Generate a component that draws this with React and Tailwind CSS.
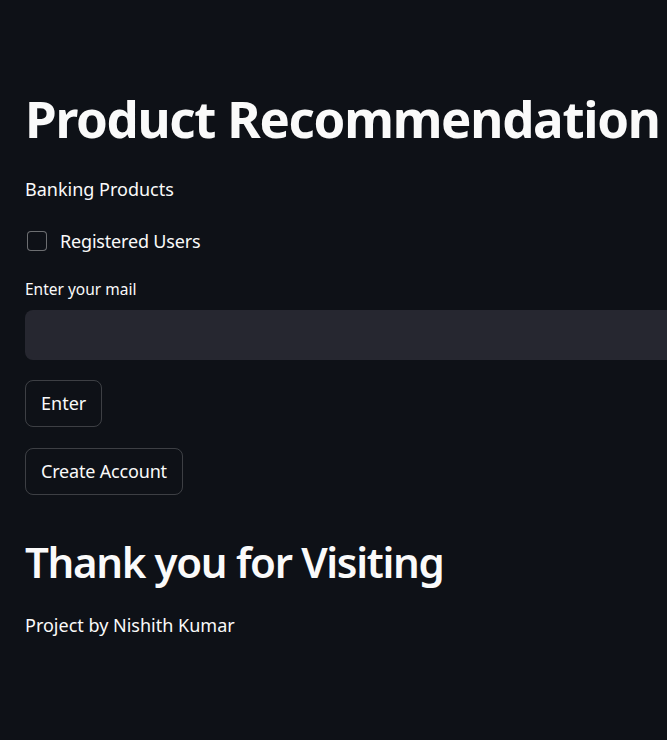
export default function App() {
  return (
    <div className="min-h-[740px] w-full overflow-hidden bg-[#0e1117] text-[#fafafa]" style={{ fontFamily: '"Noto Sans", "Open Sans", sans-serif' }}>
      <div className="w-[820px] pl-[25px] pt-[87px]">
        <h1 className="text-[51px] font-bold leading-[62px] tracking-[-0.025em]">Product Recommendation</h1>
        <p className="mt-[26px] text-[18px] leading-[28px]">Banking Products</p>
        <label className="mt-[24px] flex items-center gap-[13px]">
          <span className="ml-[2px] h-[20px] w-[20px] rounded-[4px] border border-[#fafafa]/40 bg-[#0e1117]" />
          <span className="text-[18px] leading-[28px] tracking-[-0.01em]">Registered Users</span>
        </label>
        <p className="mt-[22px] text-[15.5px] leading-[24px]">Enter your mail</p>
        <div className="mt-[9px] h-[50px] w-full rounded-[8px] bg-[#262730]" />
        <button className="mt-[20px] block h-[47px] rounded-[8px] border border-[#fafafa]/20 px-[15px] text-[18px]">Enter</button>
        <button className="mt-[21px] block h-[47px] rounded-[8px] border border-[#fafafa]/20 px-[15px] text-[18px] tracking-[-0.01em]">Create Account</button>
        <h2 className="mt-[40px] text-[42px] font-semibold leading-[54px] tracking-[-0.032em]">Thank you for Visiting</h2>
        <p className="mt-[22px] text-[18px] leading-[28px]">Project by Nishith Kumar</p>
      </div>
    </div>
  );
}
